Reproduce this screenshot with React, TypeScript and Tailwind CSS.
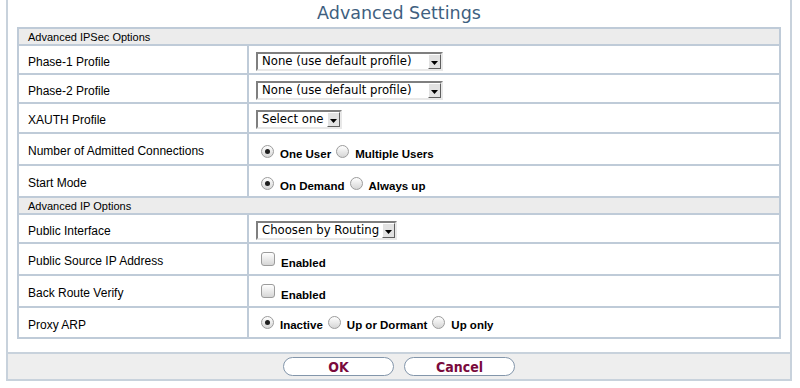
import React from "react";

function Select({ text, w }: { text: string; w: string }) {
  return (
    <div
      className={`flex h-[19px] ${w} items-center justify-between border-2 border-t-[#7f7f7f] border-l-[#7f7f7f] border-b-[#e8e8e8] border-r-[#e8e8e8] bg-white`}
    >
      <span className="pl-[4px] text-[11.7px] leading-none text-black font-['DejaVu_Sans',sans-serif] whitespace-nowrap">
        {text}
      </span>
      <span className="flex h-[15px] w-[13px] items-center justify-center border border-t-white border-l-white border-b-[#5f5f5f] border-r-[#5f5f5f] bg-[#e2e2e2]">
        <svg width="7" height="4" viewBox="0 0 7 4" className="mt-[2px]">
          <polygon points="0,0 7,0 3.5,4" fill="#000" />
        </svg>
      </span>
    </div>
  );
}

function Radio({ label, checked }: { label: string; checked?: boolean }) {
  return (
    <span className="flex items-end">
      <span className="relative mb-[3px] ml-[5px] mr-[3px] h-[13px] w-[13px] shrink-0 rounded-full border border-[#9c9c9c] bg-gradient-to-b from-[#ffffff] to-[#d6d6d6]">
        {checked ? (
          <span className="absolute left-[3px] top-[3px] h-[5px] w-[5px] rounded-full bg-[#1e1e1e]" />
        ) : null}
      </span>
      <span className="ml-[3px] text-[11.5px] font-bold leading-[14px] text-black whitespace-nowrap">{label}</span>
    </span>
  );
}

function Check({ label }: { label: string }) {
  return (
    <span className="flex items-end">
      <span className="mb-[4px] ml-[5px] mr-[3px] h-[14px] w-[14px] shrink-0 rounded-[3px] border border-[#9c9c9c] bg-gradient-to-b from-[#ffffff] to-[#d6d6d6]" />
      <span className="ml-[3px] text-[11.5px] font-bold leading-[14px] text-black">{label}</span>
    </span>
  );
}

function Header({ text, first }: { text: string; first?: boolean }) {
  return (
    <div
      className={`flex items-center bg-[#ececec] pl-[9px] pt-[2px] text-[11px] leading-[13px] text-black ${
        first ? "h-[15px]" : "h-[17px] border-t-2 border-[#bfcbd8]"
      }`}
    >
      {text}
    </div>
  );
}

function Row({
  label,
  h,
  vpad,
  children,
}: {
  label: string;
  h: string;
  vpad: string;
  children: React.ReactNode;
}) {
  return (
    <div className={`flex ${h} border-t-2 border-[#bfcbd8]`}>
      <div className="flex w-[230px] shrink-0 items-center border-r-2 border-[#bfcbd8] pl-[9px] pt-[4px] text-[12px] leading-[14px] text-black">
        {label}
      </div>
      <div className={`flex flex-1 items-start pl-[7px] ${vpad}`}>{children}</div>
    </div>
  );
}

export default function App() {
  return (
    <div className="h-[388px] w-[800px] bg-white font-['Liberation_Sans',Arial,sans-serif]">
      <div className="ml-[6px] flex w-[786px] flex-col border-x-2 border-[#c8d2dc]">
        <div className="flex h-[27px] items-center justify-center pb-[2px] font-['DejaVu_Sans',sans-serif] text-[17.5px] leading-[20px] text-[#3f5f80]">
          Advanced Settings
        </div>
        <div className="mx-[9px] border-2 border-[#bfcbd8]">
          <Header text="Advanced IPSec Options" first />
          <Row label="Phase-1 Profile" h="h-[29px]" vpad="pt-[6px]">
            <Select text="None (use default profile)" w="w-[187px]" />
          </Row>
          <Row label="Phase-2 Profile" h="h-[29px]" vpad="pt-[6px]">
            <Select text="None (use default profile)" w="w-[187px]" />
          </Row>
          <Row label="XAUTH Profile" h="h-[30px]" vpad="pt-[6px]">
            <Select text="Select one" w="w-[86px]" />
          </Row>
          <Row label="Number of Admitted Connections" h="h-[32px]" vpad="pt-[11px]">
            <Radio label="One User" checked />
            <Radio label="Multiple Users" />
          </Row>
          <Row label="Start Mode" h="h-[32px]" vpad="pt-[11px]">
            <Radio label="On Demand" checked />
            <Radio label="Always up" />
          </Row>
          <Header text="Advanced IP Options" />
          <Row label="Public Interface" h="h-[29px]" vpad="pt-[6px]">
            <Select text="Choosen by Routing" w="w-[141px]" />
          </Row>
          <Row label="Public Source IP Address" h="h-[32px]" vpad="pt-[8px]">
            <Check label="Enabled" />
          </Row>
          <Row label="Back Route Verify" h="h-[32px]" vpad="pt-[8px]">
            <Check label="Enabled" />
          </Row>
          <Row label="Proxy ARP" h="h-[31px]" vpad="pt-[8px]">
            <Radio label="Inactive" checked />
            <Radio label="Up or Dormant" />
            <Radio label="Up only" />
          </Row>
        </div>
        <div className="mt-[13px] flex h-[29px] items-center justify-center gap-[10px] border-y-2 border-[#c8d2dc] bg-[#eeeeee]">
          <button className="flex h-[19px] w-[111px] items-center justify-center rounded-full border-[1.5px] border-[#8396ab] bg-white font-['DejaVu_Sans_Condensed','DejaVu_Sans',sans-serif] text-[14px] font-bold leading-none text-[#7a0a3c]">
            OK
          </button>
          <button className="flex h-[19px] w-[111px] items-center justify-center rounded-full border-[1.5px] border-[#8396ab] bg-white font-['DejaVu_Sans_Condensed','DejaVu_Sans',sans-serif] text-[14px] font-bold leading-none text-[#7a0a3c]">
            Cancel
          </button>
        </div>
      </div>
    </div>
  );
}
